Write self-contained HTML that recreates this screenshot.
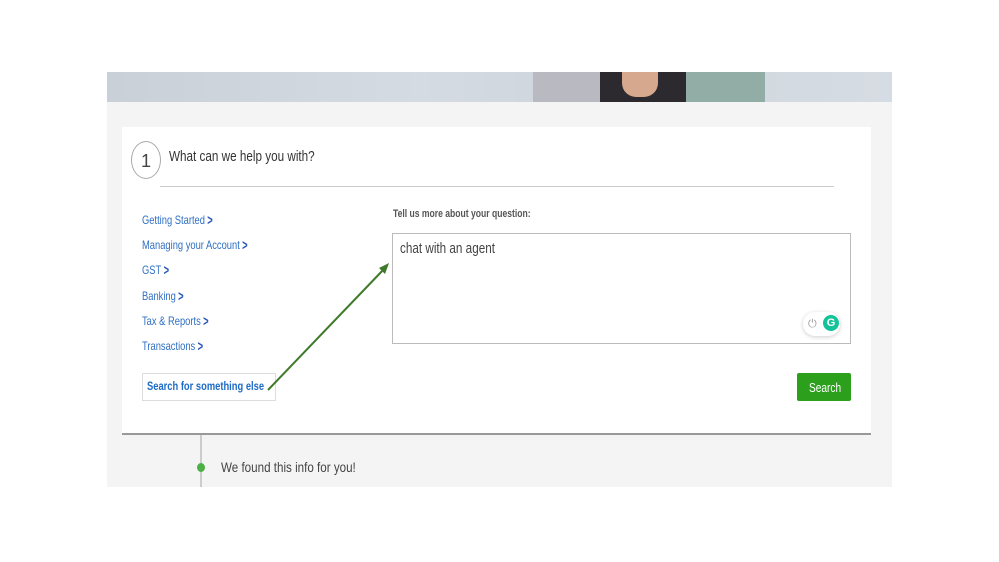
<!DOCTYPE html><html><head><style>
body{margin:0;width:999px;height:562px;background:#fff;position:relative;overflow:hidden;font-family:"Liberation Sans",sans-serif;}
.a{position:absolute}
.t{position:absolute;white-space:nowrap;transform:scaleX(.78);transform-origin:left center}
.l{position:absolute;left:142px;color:#2f6fc1;font-size:12px;white-space:nowrap;transform:scaleX(.78);transform-origin:left center}
.l b{color:#2a55b8;font-weight:bold;margin-left:3px;display:inline-block;transform:scaleY(1.2)}
</style></head><body>
<div class="a" style="left:107px;top:72px;width:785px;height:415px;background:#f4f4f4"></div>
<div class="a" style="left:107px;top:72px;width:785px;height:30px;background:linear-gradient(90deg,#c9d0d8,#d5dbe2 40%,#cfd5dc 60%,#d6dce3)"></div>
<div class="a" style="left:533px;top:72px;width:67px;height:30px;background:#b9b9c2"></div>
<div class="a" style="left:600px;top:72px;width:86px;height:30px;background:#2c2a2e"></div>
<div class="a" style="left:622px;top:72px;width:36px;height:25px;background:#d6a88e;border-radius:0 0 14px 14px"></div>
<div class="a" style="left:686px;top:72px;width:79px;height:30px;background:#92aca6"></div>
<div class="a" style="left:122px;top:127px;width:749px;height:306px;background:#fff;border-bottom:2px solid #999"></div>
<div class="a" style="left:131px;top:141px;width:28px;height:36px;border:1.5px solid #aaa;border-radius:50%;text-align:center;line-height:38px;font-size:18px;color:#444">1</div>
<div class="t" style="left:169px;top:148px;font-size:15px;color:#333">What can we help you with?</div>
<div class="a" style="left:160px;top:186px;width:674px;height:1px;background:#ccc"></div>
<div class="l" style="top:213px">Getting Started<b>&gt;</b></div>
<div class="l" style="top:238px">Managing your Account<b>&gt;</b></div>
<div class="l" style="top:263px">GST<b>&gt;</b></div>
<div class="l" style="top:289px">Banking<b>&gt;</b></div>
<div class="l" style="top:314px">Tax &amp; Reports<b>&gt;</b></div>
<div class="l" style="top:339px">Transactions<b>&gt;</b></div>
<div class="a" style="left:142px;top:373px;width:134px;height:28px;border:1px solid #ddd;box-sizing:border-box"></div>
<div class="t" style="left:147px;top:379px;font-size:12px;font-weight:bold;color:#1d6bc4">Search for something else</div>
<div class="t" style="left:393px;top:208px;font-size:11px;font-weight:bold;color:#555">Tell us more about your question:</div>
<div class="a" style="left:392px;top:233px;width:459px;height:111px;border:1px solid #bbb;box-sizing:border-box"></div>
<div class="t" style="left:400px;top:240px;font-size:15px;color:#444">chat with an agent</div>
<div class="a" style="left:803px;top:312px;width:37px;height:24px;background:#fff;border-radius:12px;box-shadow:0 1px 4px rgba(0,0,0,.2)"></div>
<div class="a" style="left:808px;top:318px;font-size:11px;color:#999">⏻</div>
<div class="a" style="left:823px;top:315px;width:16px;height:16px;background:#15c39a;border-radius:50%;color:#fff;font:bold 11px 'Liberation Sans';text-align:center;line-height:16px">G</div>
<div class="a" style="left:797px;top:373px;width:54px;height:28px;background:#2ca01c;border-radius:2px"></div>
<div class="t" style="left:809px;top:380px;font-size:13px;color:#fff">Search</div>
<svg class="a" style="left:0;top:0" width="999" height="562"><line x1="268" y1="390" x2="385" y2="268" stroke="#3f7a2a" stroke-width="2"/><polygon points="389,263 379,268 385,274" fill="#3f7a2a"/></svg>
<div class="a" style="left:200px;top:435px;width:2px;height:52px;background:#ccc"></div>
<div class="a" style="left:197px;top:463px;width:8px;height:9px;background:#4cb048;border-radius:50%"></div>
<div class="t" style="left:221px;top:459px;font-size:14px;color:#444;transform:scaleX(.83)">We found this info for you!</div>
</body></html>
